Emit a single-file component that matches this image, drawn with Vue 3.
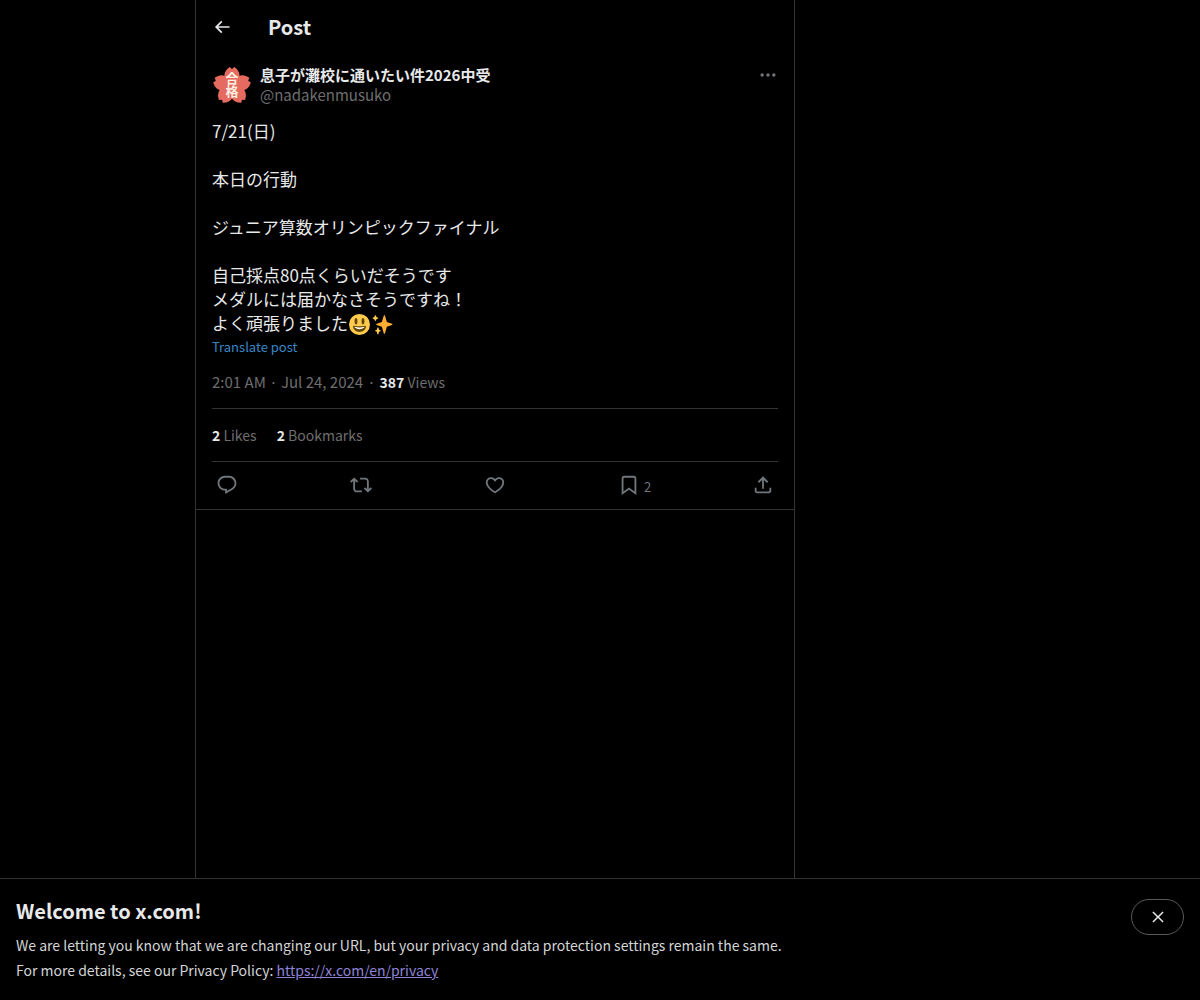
<template>
  <div class="page">
    <main class="column">
      <header class="topbar">
        <button class="icon-btn back" aria-label="Back">
          <svg viewBox="0 0 24 24"><path :d="icons.back" /></svg>
        </button>
        <h1 class="topbar-title">Post</h1>
      </header>

      <article class="post">
        <div class="author">
          <svg class="avatar" viewBox="0 0 40 40" role="img" aria-label="合格">
            <g class="blossom">
              <path v-for="n in 5" :key="n" :d="petal" :transform="`rotate(${(n - 1) * 72} 20 21)`" />
            </g>
            <text x="20" y="7" class="avatar-text">合格</text>
          </svg>
          <div class="names">
            <a class="name" href="#">息子が灘校に通いたい件2026中受</a>
            <a class="handle" href="#">@nadakenmusuko</a>
          </div>
          <button class="icon-btn more" aria-label="More">
            <svg viewBox="0 0 24 24"><path :d="icons.more" /></svg>
          </button>
        </div>

        <div class="body" lang="ja">
          <div v-for="(line, i) in lines" :key="i" class="line">{{ line }}</div>
          <div class="line">よく頑張りました<svg class="emoji" viewBox="0 0 36 36" role="img" aria-label="😃">
              <circle cx="18" cy="18" r="18" fill="#ffcc4d" />
              <path fill="#664500" d="M18 21c-3.623 0-6.027-.422-9-1-.679-.131-2 0-2 2 0 4 4.595 9 11 9 6.404 0 11-5 11-9 0-2-1.321-2.132-2-2-2.973.578-5.377 1-9 1z" />
              <path fill="#fff" d="M9 22s3 1 9 1 9-1 9-1-2 4-9 4-9-4-9-4z" />
              <ellipse cx="12" cy="12.5" rx="2.5" ry="5.5" fill="#664500" />
              <ellipse cx="24" cy="12.5" rx="2.5" ry="5.5" fill="#664500" />
            </svg><svg class="emoji" viewBox="0 0 36 36" role="img" aria-label="✨">
              <path fill="#ffac33" d="M34.347 16.893l-8.899-3.294-3.323-10.891c-.128-.42-.517-.708-.956-.708-.439 0-.828.288-.956.708l-3.322 10.891-8.9 3.294c-.393.146-.653.519-.653.938 0 .418.26.793.653.938l8.895 3.293 3.324 11.223c.126.424.516.715.959.715.442 0 .833-.291.959-.716l3.324-11.223 8.896-3.293c.391-.144.652-.518.652-.937 0-.418-.261-.792-.653-.938z" />
              <path fill="#ffcc4d" d="M14.347 27.894l-2.314-.856-.9-3.3c-.118-.436-.513-.738-.964-.738-.451 0-.846.302-.965.737l-.9 3.3-2.313.856c-.393.146-.653.52-.653.938 0 .418.26.793.653.938l2.301.853.907 3.622c.112.444.511.756.97.756.459 0 .858-.312.97-.757l.907-3.622 2.301-.853c.393-.144.653-.519.653-.937 0-.418-.26-.792-.653-.937zM10.009 6.231l-2.364-.875-.876-2.365c-.145-.393-.519-.653-.938-.653-.418 0-.792.26-.938.653l-.875 2.365-2.365.875c-.393.146-.653.52-.653.938 0 .418.26.793.653.938l2.365.875.875 2.365c.146.393.52.653.938.653.418 0 .792-.26.938-.653l.875-2.365 2.365-.875c.393-.146.653-.52.653-.938 0-.418-.26-.792-.653-.938z" />
            </svg></div>
        </div>
        <button class="translate">Translate post</button>

        <div class="meta">
          <a class="time" href="#">2:01 AM · Jul 24, 2024</a><span class="dot">·</span><span class="views"><b>387</b> Views</span>
        </div>

        <div class="stats">
          <a v-for="s in stats" :key="s.label" class="stat" href="#"><b>{{ s.count }}</b> {{ s.label }}</a>
        </div>

        <div class="actions">
          <button v-for="a in actions" :key="a.id" class="action" :aria-label="a.label">
            <svg viewBox="0 0 24 24"><path :d="icons[a.id]" /></svg>
            <span v-if="a.count" class="action-count">{{ a.count }}</span>
          </button>
        </div>
      </article>
    </main>

    <section class="notice">
      <div class="notice-text">
        <h2>Welcome to x.com!</h2>
        <p>We are letting you know that we are changing our URL, but your privacy and data protection settings remain the same.</p>
        <p>For more details, see our Privacy Policy: <a href="https://x.com/en/privacy">https://x.com/en/privacy</a></p>
      </div>
      <button class="close" aria-label="Close">
        <svg viewBox="0 0 24 24"><path :d="icons.close" /></svg>
      </button>
    </section>
  </div>
</template>

<script setup>
const lines = [
  '7/21(日)',
  '',
  '本日の行動',
  '',
  'ジュニア算数オリンピックファイナル',
  '',
  '自己採点80点くらいだそうです',
  'メダルには届かなさそうですね！',
]

const stats = [
  { count: 2, label: 'Likes' },
  { count: 2, label: 'Bookmarks' },
]

const actions = [
  { id: 'reply', label: 'Reply' },
  { id: 'repost', label: 'Repost' },
  { id: 'like', label: 'Like' },
  { id: 'bookmark', label: 'Bookmark', count: 2 },
  { id: 'share', label: 'Share' },
]

// one cherry blossom petal, rotated five times around (20, 21)
const petal = 'M20 22 L12.6 11.5 C12 8 14 4.5 17.6 2 L20 4 L22.4 2 C26 4.5 28 8 27.4 11.5z'

const icons = {
  back: 'M7.414 13l5.043 5.04-1.414 1.42L3.586 12l7.457-7.46 1.414 1.42L7.414 11H21v2H7.414z',
  more: 'M3 12c0-1.1.9-2 2-2s2 .9 2 2-.9 2-2 2-2-.9-2-2zm9 2c1.1 0 2-.9 2-2s-.9-2-2-2-2 .9-2 2 .9 2 2 2zm7 0c1.1 0 2-.9 2-2s-.9-2-2-2-2 .9-2 2 .9 2 2 2z',
  reply: 'M1.751 10c0-4.42 3.584-8 8.005-8h4.366c4.49 0 8.129 3.64 8.129 8.13 0 2.96-1.607 5.68-4.196 7.11l-8.054 4.46v-3.69h-.067c-4.49.1-8.183-3.51-8.183-8.01zm8.005-6c-3.317 0-6.005 2.69-6.005 6 0 3.37 2.77 6.08 6.138 6.01l.351-.01h1.761v2.3l5.087-2.81c1.951-1.08 3.163-3.13 3.163-5.36 0-3.39-2.744-6.13-6.129-6.13H9.756z',
  repost: 'M4.5 3.88l4.432 4.14-1.364 1.46L5.5 7.55V16c0 1.1.896 2 2 2H13v2H7.5c-2.209 0-4-1.79-4-4V7.55L1.432 9.48.068 8.02 4.5 3.88zM16.5 6H11V4h5.5c2.209 0 4 1.79 4 4v8.45l2.068-1.93 1.364 1.46-4.432 4.14-4.432-4.14 1.364-1.46 2.068 1.93V8c0-1.1-.896-2-2-2z',
  like: 'M16.697 5.5c-1.222-.06-2.679.51-3.89 2.16l-.805 1.09-.806-1.09C9.984 6.01 8.526 5.44 7.304 5.5c-1.243.07-2.349.78-2.91 1.91-.552 1.12-.633 2.78.479 4.82 1.074 1.97 3.257 4.27 7.129 6.61 3.87-2.34 6.052-4.64 7.126-6.61 1.111-2.04 1.03-3.7.477-4.82-.561-1.13-1.666-1.84-2.908-1.91zm4.187 7.69c-1.351 2.48-4.001 5.12-8.379 7.67l-.503.3-.504-.3c-4.379-2.55-7.029-5.19-8.382-7.67-1.36-2.5-1.41-4.86-.514-6.67.887-1.79 2.647-2.91 4.601-3.01 1.651-.09 3.368.56 4.798 2.01 1.429-1.45 3.146-2.1 4.796-2.01 1.954.1 3.714 1.22 4.601 3.01.896 1.81.846 4.17-.514 6.67z',
  bookmark: 'M4 4.5C4 3.12 5.119 2 6.5 2h11C18.881 2 20 3.12 20 4.5v18.44l-8-5.71-8 5.71V4.5zM6.5 4c-.276 0-.5.22-.5.5v14.56l6-4.29 6 4.29V4.5c0-.28-.224-.5-.5-.5h-11z',
  share: 'M12 2.59l5.7 5.7-1.41 1.42L13 6.41V16h-2V6.41l-3.3 3.3-1.41-1.42L12 2.59zM21 15l-.02 3.51c0 1.38-1.12 2.49-2.5 2.49H5.5C4.11 21 3 19.88 3 18.5V15h2v3.5c0 .28.22.5.5.5h12.98c.28 0 .5-.22.5-.5L19 15h2z',
  close: 'M10.59 12L4.54 5.96l1.42-1.42L12 10.59l6.04-6.05 1.42 1.42L13.41 12l6.05 6.04-1.42 1.42L12 13.41l-6.04 6.05-1.42-1.42L10.59 12z',
}
</script>

<style>
body { background: #000; }
</style>

<style scoped>
.page {
  min-height: 100vh; display: grid; grid-template-columns: 195fr minmax(0, 600px) 405fr;
  background: #000; color: #e7e9ea; font-family: "Noto Sans CJK JP", sans-serif; font-size: 15px; line-height: 20px;
}
button { background: none; border: 0; padding: 0; font: inherit; color: inherit; cursor: pointer; }
a { color: inherit; text-decoration: none; }
svg { fill: currentColor; }

.column { grid-column: 2; border-left: 1px solid #333; border-right: 1px solid #333; }
.topbar { height: 54px; display: flex; align-items: center; padding: 0 16px; }
.topbar-title { margin: 0; font-size: 20px; line-height: 24px; font-weight: 700; }
.icon-btn { display: flex; }
.icon-btn svg { width: 20px; height: 20px; }
.back { width: 56px; }

.post { padding: 11px 16px 0; border-bottom: 1px solid #333; }
.author { display: flex; align-items: flex-start; gap: 8px; }
.avatar { width: 40px; height: 40px; }
.blossom { fill: #e56a60; }
.avatar-text { writing-mode: vertical-rl; font-size: 13px; font-weight: 700; fill: #fdf0e0; }
.names { flex: 1; display: flex; flex-direction: column; align-items: flex-start; }
.name { font-weight: 700; }
.handle, .more, .meta, .stats, .actions { color: #71767b; }
.handle, .meta, .stats { color: #6e6e6e; }

.body { margin-top: 14px; font-size: 17px; line-height: 24px; }
.line { height: 24px; white-space: nowrap; }
.emoji { width: 21px; height: 21px; margin: 0 1px; vertical-align: -5px; }
.translate { display: block; margin-top: 2px; color: #3a87c8; font-size: 13px; line-height: 20px; }

.meta { padding: 15px 0 16px; border-bottom: 1px solid #333; }
.dot { padding: 0 4px; }
.views, .stats { font-size: 14px; }
.meta b, .stats b { color: #e7e9ea; font-weight: 700; }
.stats { display: flex; gap: 20px; padding: 16px 0; border-bottom: 1px solid #333; }
.actions { padding: 12px 4px; display: grid; grid-template-columns: repeat(4, 1fr) auto; align-items: start; }
.action { display: flex; align-items: flex-start; gap: 4px; height: 23px; }
.action svg { width: 22px; height: 22px; }
.action-count { font-size: 13px; padding-top: 3px; }

.notice {
  position: fixed; left: 0; right: 0; bottom: 0; display: flex; align-items: flex-start; justify-content: space-between;
  padding: 20px 16px 17px; background: #000; border-top: 1px solid #333;
}
.notice h2 { margin: 0 0 10px; font-size: 20px; line-height: 24px; font-weight: 700; }
.notice p { margin: 0; font-size: 14px; line-height: 25px; color: #d3d5d6; }
.notice p a { color: #8f83d8; text-decoration: underline; }
.close {
  display: flex; align-items: center; justify-content: center; width: 53px; height: 36px;
  border: 1px solid #5a5a5a; border-radius: 18px; flex-shrink: 0;
}
.close svg { width: 18px; height: 18px; }
</style>
